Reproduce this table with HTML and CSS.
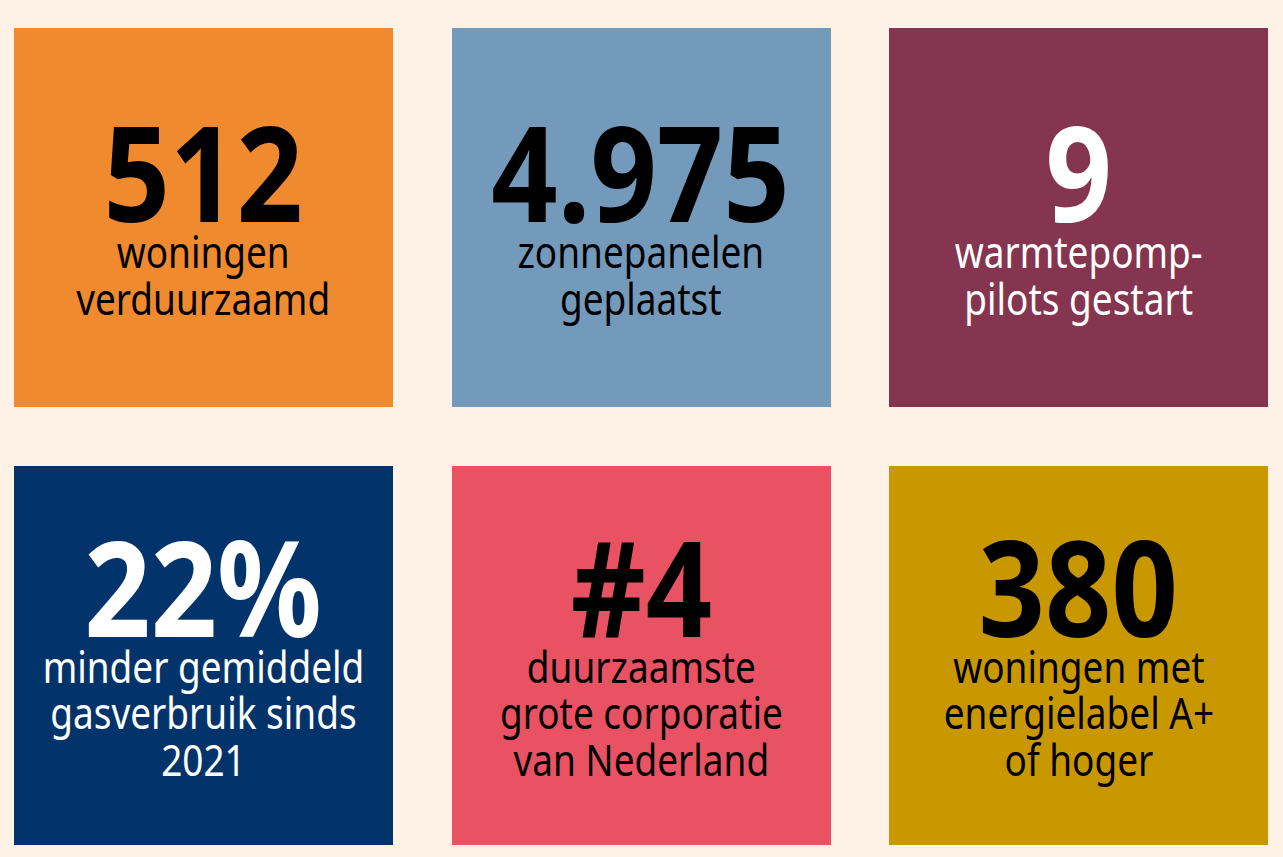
FILE: index.html
```html
<!DOCTYPE html>
<html lang="nl">
<head>
<meta charset="utf-8">
<title>Kerncijfers duurzaamheid</title>
<link rel="stylesheet" href="styles.css">
</head>
<body>
<main class="grid">
  <section class="tile orange">
    <div class="num">512</div>
    <div class="label">woningen<br>verduurzaamd</div>
  </section>
  <section class="tile blue">
    <div class="num">4.975</div>
    <div class="label">zonnepanelen<br>geplaatst</div>
  </section>
  <section class="tile maroon light">
    <div class="num">9</div>
    <div class="label">warmtepomp-<br>pilots gestart</div>
  </section>
  <section class="tile navy light">
    <div class="num">22%</div>
    <div class="label">minder gemiddeld<br>gasverbruik sinds<br>2021</div>
  </section>
  <section class="tile coral">
    <div class="num">#4</div>
    <div class="label">duurzaamste<br>grote corporatie<br>van Nederland</div>
  </section>
  <section class="tile gold">
    <div class="num">380</div>
    <div class="label">woningen met<br>energielabel A+<br>of hoger</div>
  </section>
</main>
</body>
</html>
```
FILE: styles.css
```css
html, body {
  margin: 0;
  padding: 0;
  background: #fef1e6;
}

body {
  font-family: "Noto Sans", "Open Sans", sans-serif;
  width: 1283px;
  height: 857px;
  overflow: hidden;
}

.grid {
  display: grid;
  grid-template-columns: repeat(3, 379px);
  grid-auto-rows: 379px;
  column-gap: 58.5px;
  row-gap: 59px;
  padding: 28px 0 0 14px;
}

.tile {
  display: flex;
  flex-direction: column;
  align-items: center;
  justify-content: center;
  text-align: center;
  color: #000;
  white-space: nowrap;
}

.tile.light {
  color: #fff;
}

/* condensed look: the face has no condensed cut installed */
.num {
  font-weight: 700;
  font-size: 132px;
  line-height: 114px;
  transform: scaleX(0.88);
}

.label {
  font-size: 44px;
  line-height: 46.5px;
  transform: scaleX(0.84);
}

.orange { background: #f08a2e; }
.blue { background: #7399bb; }
.maroon { background: #85354f; }
.navy { background: #02346b; }
.coral { background: #e95262; }
.gold { background: #c99700; }
```
